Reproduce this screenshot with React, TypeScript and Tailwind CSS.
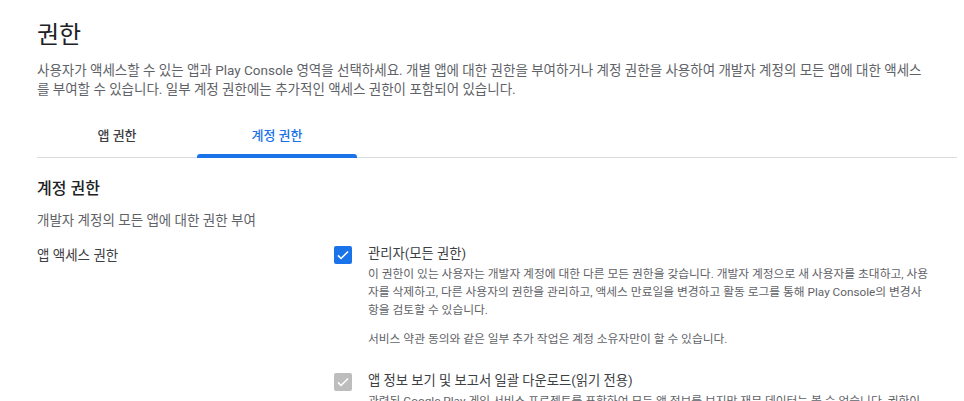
import React from "react";

const CheckIcon = () => (
  <svg viewBox="0 0 18 18" className="w-[14px] h-[14px]" fill="none">
    <path d="M2.5 9.5l4 4 9-9" stroke="white" strokeWidth="2" />
  </svg>
);

function Checkbox({ disabled }: { disabled?: boolean }) {
  return (
    <div
      className={`w-[18px] h-[18px] rounded-[2px] flex items-center justify-center shrink-0 ${
        disabled ? "bg-[#bdbdbd]" : "bg-[#1a73e8]"
      }`}
    >
      <CheckIcon />
    </div>
  );
}

const tabs = ["앱 권한", "계정 권한"];

export default function App() {
  return (
    <div className="min-h-screen bg-white text-[#202124] font-['Roboto','Noto_Sans_CJK_KR',sans-serif] overflow-hidden">
      <div className="pl-[37px] pr-[7px] pt-[21px]">
        <h1 className="text-[24px] leading-[28px]">권한</h1>
        <p className="mt-[12px] text-[13.5px] leading-[19px] text-[#5f6368] pr-[28px]">
          사용자가 액세스할 수 있는 앱과 Play Console 영역을 선택하세요. 개별 앱에 대한 권한을 부여하거나 계정 권한을 사용하여 개발자 계정의 모든 앱에 대한 액세스를 부여할 수 있습니다. 일부 계정 권한에는 추가적인 액세스 권한이 포함되어 있습니다.
        </p>

        <div className="mt-[16px] flex border-b border-[#dadce0]">
          {tabs.map((t, i) => (
            <div
              key={t}
              className={`relative w-[160px] h-[42px] flex items-center justify-center text-[13px] font-medium ${
                i === 1 ? "text-[#1a73e8]" : "text-[#3c4043]"
              }`}
            >
              {t}
              {i === 1 && (
                <div className="absolute left-0 right-0 -bottom-px h-[4px] rounded-t-[3px] bg-[#1a73e8]" />
              )}
            </div>
          ))}
        </div>

        <h2 className="mt-[20px] text-[16px] leading-[22px] font-medium">계정 권한</h2>
        <p className="mt-[11px] text-[13.5px] leading-[19px] text-[#5f6368]">
          개발자 계정의 모든 앱에 대한 권한 부여
        </p>

        <div className="mt-[16px] flex">
          <div className="w-[297px] shrink-0 text-[13.5px] leading-[19px] text-[#3c4043]">
            앱 액세스 권한
          </div>
          <div className="flex flex-col gap-[25px]">
            <div className="flex gap-[16px]">
              <Checkbox />
              <div className="-mt-[1px]">
                <div className="text-[13.3px] leading-[18px] text-[#3c4043]">관리자(모든 권한)</div>
                <p className="mt-[2px] w-[564px] text-[11.75px] leading-[18px] text-[#5f6368]">
                  이 권한이 있는 사용자는 개발자 계정에 대한 다른 모든 권한을 갖습니다. 개발자 계정으로 새 사용자를 초대하고, 사용자를 삭제하고, 다른 사용자의 권한을 관리하고, 액세스 만료일을 변경하고 활동 로그를 통해 Play Console의 변경사항을 검토할 수 있습니다.
                </p>
                <p className="mt-[11px] text-[11.75px] leading-[18px] text-[#5f6368]">
                  서비스 약관 동의와 같은 일부 추가 작업은 계정 소유자만이 할 수 있습니다.
                </p>
              </div>
            </div>
            <div className="flex gap-[16px]">
              <Checkbox disabled />
              <div className="-mt-[1px]">
                <div className="text-[13.3px] leading-[18px] text-[#3c4043]">
                  앱 정보 보기 및 보고서 일괄 다운로드(읽기 전용)
                </div>
                <p className="mt-[2px] w-[564px] text-[11.75px] leading-[18px] text-[#5f6368]">
                  관련된 Google Play 게임 서비스 프로젝트를 포함하여 모든 앱 정보를 보지만 재무 데이터는 볼 수 없습니다. 권한이 있는 사용자는 보고서를 일괄 다운로드할 수 있습니다.
                </p>
              </div>
            </div>
          </div>
        </div>
      </div>
    </div>
  );
}
